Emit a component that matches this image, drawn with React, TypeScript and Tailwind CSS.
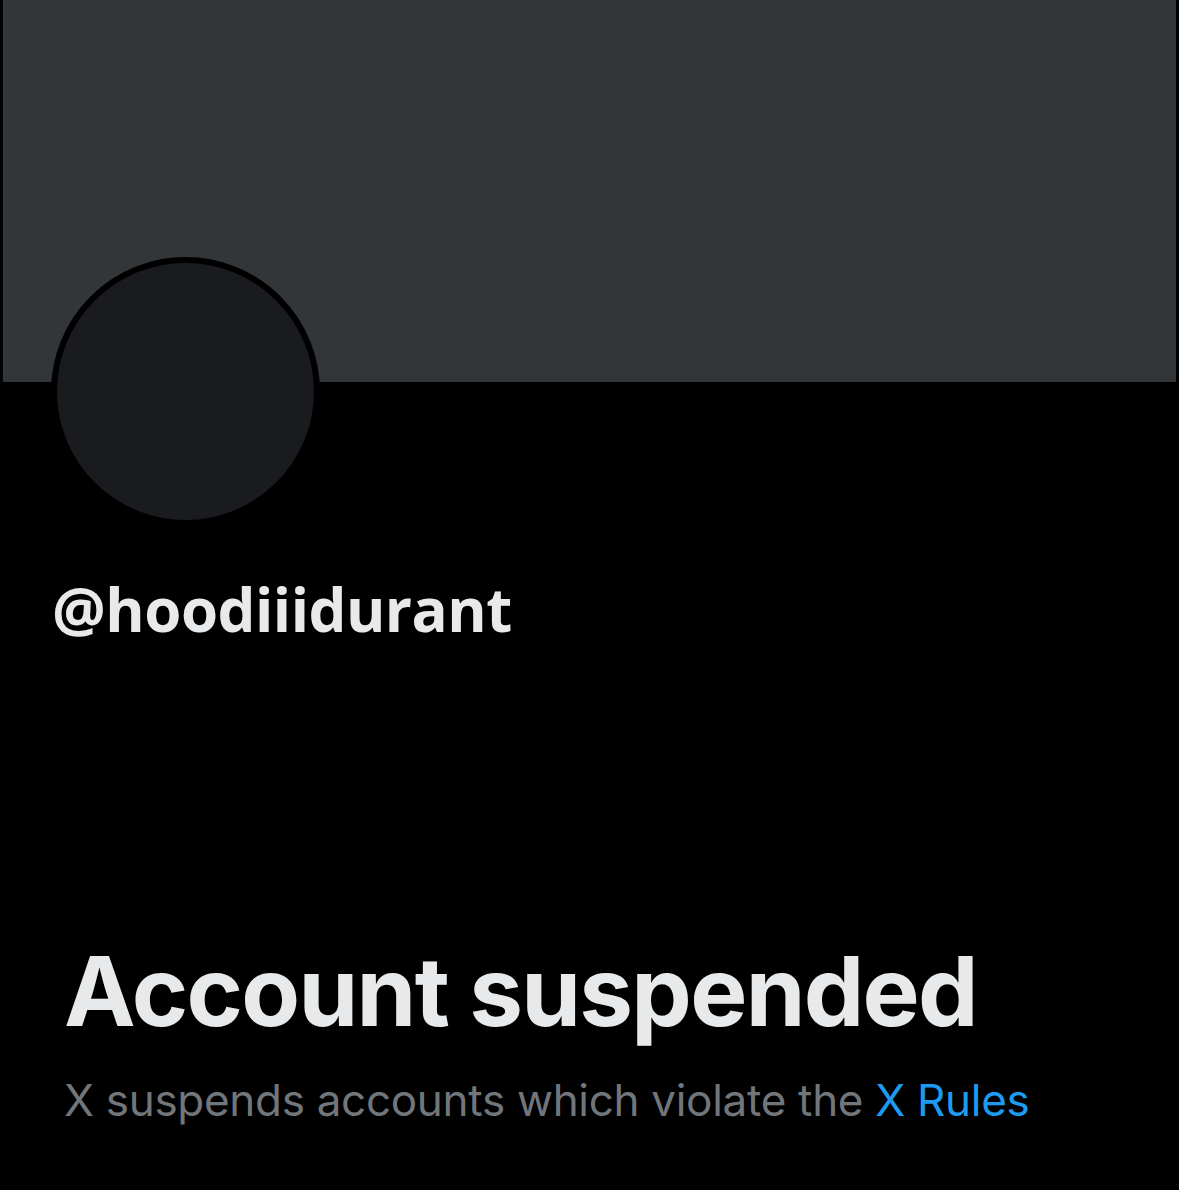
import React from "react";

const App: React.FC = () => {
  return (
    <main className="min-h-[1190px] w-full bg-black overflow-hidden">
      <div className="mx-[3px] h-[382px] bg-[#333639]" />

      <div className="-mt-[125px] ml-[51px] h-[263px] w-[269px] overflow-hidden">
        <div className="h-[269px] w-[269px] rounded-full border-[6px] border-black bg-[#1a1b1f]" />
      </div>

      <h2
        className="mt-[59px] ml-[52px] text-[60px] font-bold leading-none tracking-[-0.5px] text-[#e7e9ea]"
        style={{ fontFamily: '"Open Sans", sans-serif' }}
      >
        @hoodiiidurant
      </h2>

      <section className="mt-[304px] ml-[64px]" style={{ fontFamily: "Inter, sans-serif" }}>
        <h1 className="text-[96px] font-bold leading-none tracking-[-1.7px] text-[#e7e9ea]">
          Account suspended
        </h1>
        <p className="mt-[39px] text-[44px] leading-none tracking-[-0.3px] text-[#71767b]">
          X suspends accounts which violate the <a className="text-[#1d9bf0]">X Rules</a>
        </p>
      </section>
    </main>
  );
};

export default App;
